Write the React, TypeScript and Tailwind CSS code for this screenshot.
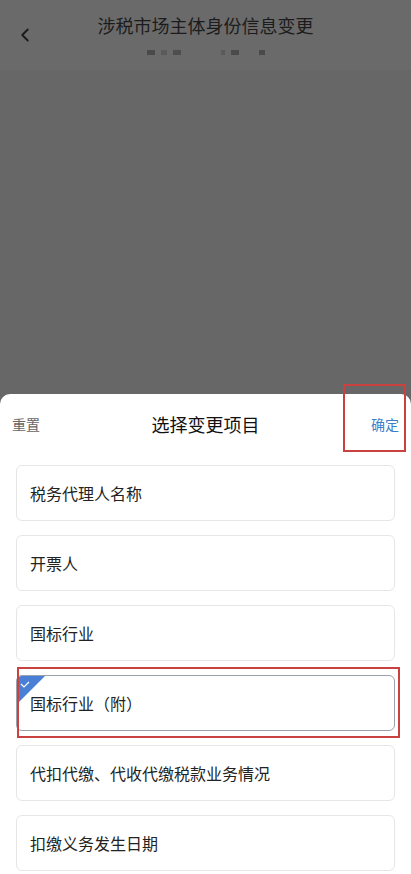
import { ChevronLeft } from 'lucide-react'

const items = [
  '税务代理人名称',
  '开票人',
  '国标行业',
  '国标行业（附）',
  '代扣代缴、代收代缴税款业务情况',
  '扣缴义务发生日期',
]

const selected = 3

export default function App() {
  return (
    <div
      className="relative h-[874px] w-[411px] overflow-hidden bg-[#676767] flex flex-col"
      style={{ fontFamily: '"Noto Sans CJK SC", "Noto Sans", sans-serif' }}
    >
      {/* dimmed page header */}
      <div className="relative h-[70px] shrink-0 bg-[#6a6a6a] flex flex-col items-center">
        <ChevronLeft className="absolute left-[14px] top-[24px] text-[#1a1a1a]" size={22} strokeWidth={2} />
        <div className="mt-[12px] text-[18px] leading-[26px] text-[#1c1c1c]">涉税市场主体身份信息变更</div>
        <div className="mt-[12px] flex items-center gap-[6px] blur-[0.6px]">
          <span className="h-[5px] w-[8px] bg-[#4a4a4a]" />
          <span className="h-[5px] w-[6px] bg-[#5a5a5a]" />
          <span className="h-[5px] w-[8px] bg-[#4e4e4e]" />
          <span className="w-[28px]" />
          <span className="h-[5px] w-[4px] bg-[#5a5a5a]" />
          <span className="h-[5px] w-[8px] bg-[#4a4a4a]" />
          <span className="w-[8px]" />
          <span className="h-[5px] w-[6px] bg-[#4a4a4a]" />
        </div>
      </div>

      <div className="flex-1" />

      {/* bottom sheet */}
      <div className="h-[480px] shrink-0 rounded-t-[10px] bg-white">
        <div className="flex h-[60px] items-center justify-between px-[12px] pt-[1px]">
          <span className="text-[14px] text-[#666]">重置</span>
          <span className="text-[18px] text-[#111]">选择变更项目</span>
          <span className="text-[14px] text-[#3d7fc9]">确定</span>
        </div>
        <div className="mt-[11px] flex flex-col gap-[14px] px-[16px]">
          {items.map((t, i) => (
            <div
              key={t}
              className={`relative flex h-[56px] items-center overflow-hidden rounded-[6px] border px-[13px] text-[16px] text-[#222] ${
                i === selected ? 'border-[#9aa3ad]' : 'border-[#e6e6e6]'
              }`}
            >
              {i === selected && (
                <svg className="absolute left-0 top-0" width="28" height="28" viewBox="0 0 28 28">
                  <polygon points="0,0 28,0 0,28" fill="#4a7fd6" />
                  <polyline points="4,8 7,11 12,6" fill="none" stroke="#fff" strokeWidth="1.2" />
                </svg>
              )}
              {t}
            </div>
          ))}
        </div>
      </div>

      {/* annotation boxes */}
      <div className="absolute left-[343px] top-[384px] h-[68px] w-[63px] border-2 border-solid border-[#c9423f]" />
      <div className="absolute left-[17px] top-[667px] h-[71px] w-[383px] border-2 border-solid border-[#c9423f]" />
    </div>
  )
}
